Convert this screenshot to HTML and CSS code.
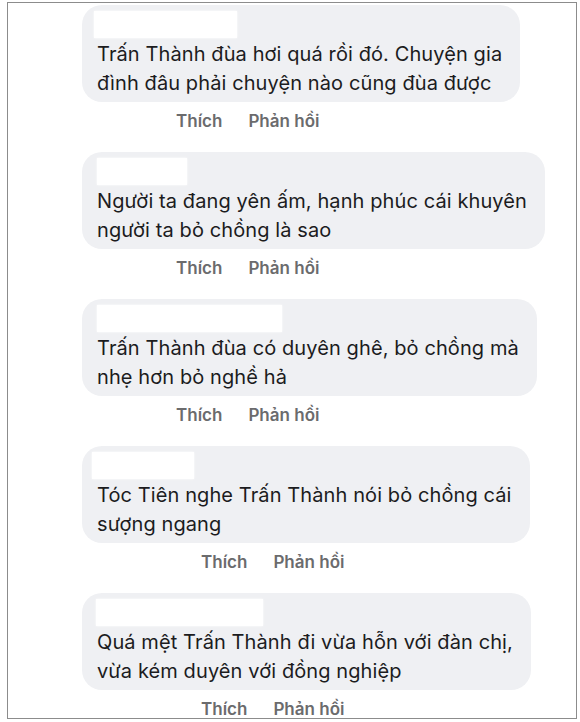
FILE: index.html
```html
<!DOCTYPE html>
<html lang="vi">
<head>
    <meta charset="UTF-8">
    <meta name="viewport" content="width=device-width, initial-scale=1.0">
    <title>Bình luận</title>
    <link rel="stylesheet" href="styles.css">
</head>
<body>
    <div class="frame">
        <div class="comment">
            <div class="bubble">
                <div class="name name-1"></div>
                <div class="text">Trấn Thành đùa hơi quá rồi đó. Chuyện gia<br>đình đâu phải chuyện nào cũng đùa được</div>
            </div>
            <div class="actions">
                <span>Thích</span>
                <span>Phản hồi</span>
            </div>
        </div>

        <div class="comment">
            <div class="bubble">
                <div class="name name-2"></div>
                <div class="text">Người ta đang yên ấm, hạnh phúc cái khuyên<br>người ta bỏ chồng là sao</div>
            </div>
            <div class="actions">
                <span>Thích</span>
                <span>Phản hồi</span>
            </div>
        </div>

        <div class="comment">
            <div class="bubble">
                <div class="name name-3"></div>
                <div class="text">Trấn Thành đùa có duyên ghê, bỏ chồng mà<br>nhẹ hơn bỏ nghề hả</div>
            </div>
            <div class="actions">
                <span>Thích</span>
                <span>Phản hồi</span>
            </div>
        </div>

        <div class="comment">
            <div class="bubble">
                <div class="name name-4"></div>
                <div class="text">Tóc Tiên nghe Trấn Thành nói bỏ chồng cái<br>sượng ngang</div>
            </div>
            <div class="actions actions-wide">
                <span>Thích</span>
                <span>Phản hồi</span>
            </div>
        </div>

        <div class="comment">
            <div class="bubble">
                <div class="name name-5"></div>
                <div class="text">Quá mệt Trấn Thành đi vừa hỗn với đàn chị,<br>vừa kém duyên với đồng nghiệp</div>
            </div>
            <div class="actions actions-wide">
                <span>Thích</span>
                <span>Phản hồi</span>
            </div>
        </div>
    </div>
</body>
</html>
```

FILE: styles.css
```css
body {
    margin: 0;
    padding: 0;
    background-color: #fff;
    font-family: Inter, "Noto Sans", sans-serif;
}
.frame {
    width: 568px;
    height: 713px;
    margin: 2px 0 0 7px;
    border: 1px solid #8c8c8c;
    overflow: hidden;
    display: flex;
    flex-direction: column;
    padding-top: 2px;
    box-sizing: content-box;
}
.comment {
    display: flex;
    flex-direction: column;
    align-items: flex-start;
    padding-left: 74px;
}
.bubble {
    width: fit-content;
    background-color: #eff0f3;
    border-radius: 20px;
    padding: 6px 18px 4px 15px;
}
.name {
    height: 27px;
    background-color: #fff;
    margin-bottom: 2px;
    box-shadow: 0 0 2px #fff;
}
.name-1 { width: 143px; margin-left: -3px; }
.name-2 { width: 90px; }
.name-3 { width: 185px; }
.name-4 { width: 102px; margin-left: -5px; }
.name-5 { width: 167px; margin-left: -1px; }
.text {
    font-size: 20px;
    line-height: 29px;
    letter-spacing: 0.1px;
    color: #1c1c1e;
}
.actions {
    display: flex;
    gap: 26px;
    height: 38px;
    align-items: center;
    margin: 0 0 12px 94px;
    font-size: 17px;
    font-weight: 600;
    color: #6b6b6d;
}
.actions-wide {
    margin-left: 119px;
}
```
